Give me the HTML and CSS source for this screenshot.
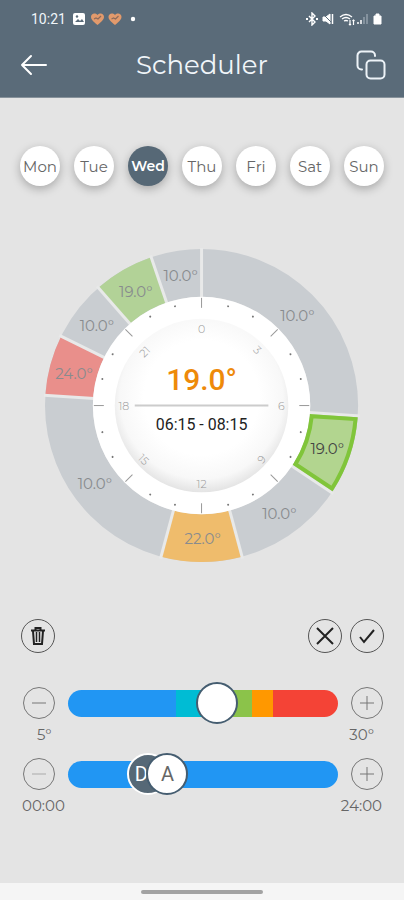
FILE: index.html
```html
<!DOCTYPE html>
<html lang="en">
<head>
<meta charset="utf-8">
<meta name="viewport" content="width=device-width, initial-scale=1">
<title>Scheduler</title>
<link rel="stylesheet" href="styles.css">
</head>
<body>
<header class="top">
  <div class="status">
    <span class="clock">10:21</span>
    <svg class="notices" width="74" height="14" viewBox="0 0 74 14" aria-hidden="true">
      <rect x="0" y="1" width="12" height="12" rx="2" fill="#fff"/>
      <path d="M2 10l3-3 2 2 2-2 2 3z" fill="#5a6b79"/><circle cx="4" cy="4.500" r="1.200" fill="#5a6b79"/>
      <g fill="#e29a6c">
        <path d="M24.500 13C20 9.500 18 7.500 18 4.800 18 1.500 22 .2 24.500 3 27 .2 31 1.500 31 4.800 31 7.500 29 9.500 24.500 13z"/>
        <path d="M42 13C37.500 9.500 35.500 7.500 35.500 4.800 35.500 1.500 39.500.2 42 3 44.500.2 48.500 1.500 48.500 4.800 48.500 7.500 46.500 9.500 42 13z"/>
      </g>
      <path d="M21 7l2-1 2 1 3-3M38.500 7l2-1 2 1 3-3" fill="none" stroke="#8b6a5b" stroke-width="1.200"/>
      <circle cx="60" cy="7" r="2.200" fill="#fff"/>
    </svg>
    <svg class="system" width="78" height="14" viewBox="0 0 78 14" fill="none" stroke="#fff" aria-hidden="true">
      <path d="M3 4l6 6-3 3V1l3 3-6 6" stroke-width="1.400"/><path d="M0 7h2M10 7h2" stroke-width="2"/>
      <path d="M17 5h3l4-3v10l-4-3h-3z" fill="#fff"/><path d="M17 2l10 10" stroke="#5a6b79"/><path d="M26.500 2v10" stroke-width="1.500"/>
      <path d="M34 5q6-5 12 0M36 7q4-3 8 0M38 9q2-1 4 0" stroke-width="1.300"/><path d="M44 8v5m-1-1l1 1 1-1M47.500 13V8m-1 1l1-1 1 1" stroke-width="1.200"/>
      <path d="M52 12v-2M55 12V8" stroke-width="1.500"/><path d="M58 12V5M61 12V2" stroke="#93a0aa" stroke-width="1.500"/>
      <path d="M68 4h2V2h3v2h2v8h-7z" fill="#fff" stroke-linejoin="round"/>
    </svg>
  </div>
  <div class="bar">
    <button class="plain" aria-label="Back">
      <svg width="28" height="22" viewBox="0 0 28 22" fill="none" stroke="#fff" stroke-width="2" stroke-linecap="round" stroke-linejoin="round"><path d="M26 11H2M11 2L2 11l9 9"/></svg>
    </button>
    <h1>Scheduler</h1>
    <button class="plain" aria-label="Copy schedule">
      <svg width="30" height="30" viewBox="0 0 30 30" fill="none" stroke="#edf3f8" stroke-width="2" stroke-linecap="round"><rect x="10.500" y="10.500" width="18" height="18" rx="4"/><path d="M6 19.500H5.500a4 4 0 0 1-4-4V5.500a4 4 0 0 1 4-4h9.500a4 4 0 0 1 4 4V6"/></svg>
    </button>
  </div>
</header>

<main>
  <nav class="days" aria-label="Day">
    <button>Mon</button><button>Tue</button><button class="active" aria-pressed="true">Wed</button><button>Thu</button><button>Fri</button><button>Sat</button><button>Sun</button>
  </nav>

  <svg class="dial" viewBox="-158 -158 316 316" role="img" aria-label="Temperature schedule for Wednesday">
    <defs>
      <radialGradient id="disc" cx="0" cy="-8" r="96" gradientUnits="userSpaceOnUse">
        <stop offset="0.600" stop-color="#fff"/><stop offset="0.850" stop-color="#f8f8f8"/><stop offset="1" stop-color="#e2e2e2"/>
      </radialGradient>
    </defs>
    <!-- One unit of path length is a quarter of an hour, starting at midnight. -->
    <g class="ring" transform="rotate(-90)">
      <circle r="133" pathLength="96" class="cool"/>
      <circle r="133" pathLength="96" class="mild" stroke-dasharray="8 88" stroke-dashoffset="-25"/>
      <circle r="133" pathLength="96" class="warm" stroke-dasharray="8 88" stroke-dashoffset="-44"/>
      <circle r="133" pathLength="96" class="hot" stroke-dasharray="6 90" stroke-dashoffset="-73"/>
      <circle r="133" pathLength="96" class="mild" stroke-dasharray="6 90" stroke-dashoffset="-85"/>
    </g>
    <g class="gaps">
      <path d="M0-108V-159"/>
      <path d="M0-108V-159" transform="rotate(93.750)"/>
      <path d="M0-108V-159" transform="rotate(123.750)"/>
      <path d="M0-108V-159" transform="rotate(165)"/>
      <path d="M0-108V-159" transform="rotate(195)"/>
      <path d="M0-108V-159" transform="rotate(273.750)"/>
      <path d="M0-108V-159" transform="rotate(296.250)"/>
      <path d="M0-108V-159" transform="rotate(318.750)"/>
      <path d="M0-108V-159" transform="rotate(341.250)"/>
    </g>
    <circle r="109" fill="#fff"/>
    <path class="selected" d="M110.500 10.700L154.400 13.600A155 155 0 0 1 130.800 83.200L94.200 58.700A111 111 0 0 0 110.500 10.700z"/>
    <circle r="87" fill="url(#disc)"/>
    <g class="ticks">
      <path id="tick" d="M0-108V-98"/>
      <use href="#tick" transform="rotate(45)"/><use href="#tick" transform="rotate(90)"/><use href="#tick" transform="rotate(135)"/><use href="#tick" transform="rotate(180)"/><use href="#tick" transform="rotate(225)"/><use href="#tick" transform="rotate(270)"/><use href="#tick" transform="rotate(315)"/>
    </g>
    <g class="dots">
      <circle id="dot" cy="-103" r="1" transform="rotate(15)"/>
      <use href="#dot" transform="rotate(15)"/><use href="#dot" transform="rotate(45)"/><use href="#dot" transform="rotate(60)"/><use href="#dot" transform="rotate(90)"/><use href="#dot" transform="rotate(105)"/><use href="#dot" transform="rotate(135)"/><use href="#dot" transform="rotate(150)"/><use href="#dot" transform="rotate(180)"/><use href="#dot" transform="rotate(195)"/><use href="#dot" transform="rotate(225)"/><use href="#dot" transform="rotate(240)"/><use href="#dot" transform="rotate(270)"/><use href="#dot" transform="rotate(285)"/><use href="#dot" transform="rotate(315)"/><use href="#dot" transform="rotate(330)"/>
    </g>
    <g class="hours">
      <text y="-73">0</text>
      <text transform="translate(56 -56) rotate(45)" y="4">3</text>
      <text x="80" y="4">6</text>
      <text transform="translate(60 54) rotate(-45)" y="4">9</text>
      <text y="83">12</text>
      <text transform="translate(-58 54) rotate(45)" y="4">15</text>
      <text x="-78" y="4">18</text>
      <text transform="translate(-57 -54) rotate(-45)" y="4">21</text>
    </g>
    <g class="temps">
      <text x="96" y="-85">10.0°</text><text x="126" y="49" class="current">19.0°</text><text x="78" y="114">10.0°</text><text x="1" y="139">22.0°</text><text x="-107" y="84">10.0°</text><text x="-128" y="-27">24.0°</text><text x="-105" y="-75">10.0°</text><text x="-66" y="-109">19.0°</text><text x="-21" y="-125">10.0°</text>
    </g>
    <text class="reading" y="-16">19.0°</text>
    <path d="M-67 0H67" stroke="#ccc" stroke-width="2"/>
    <text class="period" y="25">06:15 - 08:15</text>
  </svg>

  <div class="actions">
    <button class="round" aria-label="Delete period">
      <svg width="20" height="20" viewBox="0 0 20 20" fill="none" stroke="#222" stroke-width="2"><path d="M3 4.500h14M7.500 4V2h5v2M5 5l1 13h8l1-13"/><path d="M8.500 6v10M11.500 6v10" stroke-width="1.500"/></svg>
    </button>
    <button class="round push" aria-label="Cancel">
      <svg width="20" height="20" viewBox="0 0 20 20" fill="none" stroke="#222" stroke-width="2"><path d="M2 2l16 16M18 2L2 18"/></svg>
    </button>
    <button class="round" aria-label="Confirm">
      <svg width="20" height="20" viewBox="0 0 20 20" fill="none" stroke="#222" stroke-width="2"><path d="M3 11l4 5L17 4"/></svg>
    </button>
  </div>

  <section class="control">
    <button class="round small" aria-label="Lower temperature"><svg width="16" height="16" viewBox="0 0 16 16" stroke="#777"><path d="M1 8h14"/></svg></button>
    <div class="slider"><input class="temperature" type="range" min="5" max="30" step="0.5" value="19" aria-label="Temperature"></div>
    <button class="round small" aria-label="Raise temperature"><svg width="16" height="16" viewBox="0 0 16 16" stroke="#777"><path d="M1 8h14M8 1v14"/></svg></button>
  </section>
  <div class="limits degrees"><span>5°</span><span>30°</span></div>

  <section class="control">
    <button class="round small" aria-label="Earlier"><svg width="16" height="16" viewBox="0 0 16 16" stroke="#aaa"><path d="M1 8h14"/></svg></button>
    <div class="slider">
      <input class="from" id="from" type="range" min="0" max="1440" step="15" value="375">
      <label class="letter light" for="from" style="--at: 0.26">D</label>
      <input class="until" id="until" type="range" min="0" max="1440" step="15" value="495">
      <label class="letter" for="until" style="--at: 0.344">A</label>
    </div>
    <button class="round small" aria-label="Later"><svg width="16" height="16" viewBox="0 0 16 16" stroke="#777"><path d="M1 8h14M8 1v14"/></svg></button>
  </section>
  <div class="limits"><span>00:00</span><span>24:00</span></div>
</main>
<footer><span class="handle"></span></footer>
</body>
</html>
```

FILE: styles.css
```css
* { box-sizing: border-box; }

body {
  margin: 0;
  min-height: 100vh;
  display: flex;
  flex-direction: column;
  background: #e4e4e4;
  color: #666;
  font-family: Montserrat, Inter, sans-serif;
}

button {
  margin: 0;
  padding: 0;
  border: 0;
  background: none;
  font: inherit;
  color: inherit;
  cursor: pointer;
}

svg { display: block; flex: none; }

.top {
  background: #5a6b79;
  color: #f0f5f9;
  height: 98px;
  border-bottom: 1px solid #87929b;
}

.status {
  display: flex;
  align-items: center;
  height: 37px;
  padding: 0 20px 0 31px;
}

.clock { font: 14px Roboto, sans-serif; width: 42px; }
.system { margin-left: auto; }

.bar {
  display: flex;
  align-items: center;
  justify-content: space-between;
  height: 56px;
  padding: 0 18px 0 20px;
}

h1 { margin: 0; font-size: 26px; line-height: 32px; font-weight: 400; }

main { flex: 1; padding-top: 48px; }

.days {
  display: flex;
  justify-content: space-between;
  padding: 0 20px;
}

.days button {
  width: 40px;
  height: 40px;
  border-radius: 50%;
  background: #fff;
  font-size: 15px;
  box-shadow: 0 3px 10px #0004;
  display: flex;
  align-items: center;
  justify-content: center;
}

.days .active { background: #566876; color: #fff; font-size: 14px; font-weight: 600; }

.dial { width: 78%; margin: 62px auto 56px; }

.ring { fill: none; stroke-width: 48; }
.cool { stroke: #c9cdd1; }
.mild { stroke: #b2d297; }
.warm { stroke: #efbc6c; }
.hot { stroke: #e98f8b; }
.gaps { stroke: #e8e9e9; stroke-width: 3; }
.selected { fill: #b2d58f; stroke: #80c53a; stroke-width: 4; }
.ticks { stroke: #999; }
.dots { fill: #777; }

.dial text { text-anchor: middle; }
.hours { fill: #999; font-size: 11px; font-weight: 300; }
.temps { fill: #888b8e; font-size: 15px; }
.temps .current { fill: #444; }
.reading { fill: #ee8a0a; font: 500 30px Roboto, sans-serif; }
.period { fill: #222; font: 16px Roboto, sans-serif; }

.actions { display: flex; gap: 8px; padding: 0 20px 0 21px; }
.push { margin-left: auto; }

.round {
  width: 34px;
  height: 34px;
  border: 1px solid #555;
  border-radius: 50%;
  display: flex;
  align-items: center;
  justify-content: center;
  flex: none;
}

.small { width: 32px; height: 32px; border-color: #777; }

.control {
  display: flex;
  align-items: center;
  justify-content: space-between;
  gap: 13px;
  padding: 0 21px 0 23px;
}

.actions + .control { margin-top: 29px; }

.slider { position: relative; flex: 1; height: 42px; }

input {
  appearance: none;
  position: absolute;
  inset: 0;
  width: 100%;
  height: 42px;
  margin: 0;
  background: none;
  pointer-events: none;
}

input::-webkit-slider-runnable-track { height: 27px; border-radius: 14px; }

.temperature::-webkit-slider-runnable-track {
  background: linear-gradient(90deg, #2196f3 40%, #00bcd4 40% 56%, #8bc34a 56% 68%, #ff9800 68% 76%, #f44336 76%);
}

.from::-webkit-slider-runnable-track { background: #2196f3; }

input::-webkit-slider-thumb {
  appearance: none;
  pointer-events: auto;
  width: 42px;
  height: 42px;
  margin-top: -8px;
  border: 2px solid #455d70;
  border-radius: 50%;
  background: #fff;
}

.from::-webkit-slider-thumb { background: #566876; border-color: #fff; }

.letter {
  position: absolute;
  left: calc(21px + (100% - 42px) * var(--at));
  top: 50%;
  transform: translate(-50%, -50%);
  pointer-events: none;
  font: 20px Roboto, sans-serif;
}

.light { color: #fff; padding-right: 14px; }

.limits {
  display: flex;
  justify-content: space-between;
  padding: 2px 22px 0;
  font-size: 15px;
  line-height: 18px;
}

.degrees { padding: 2px 30px 0 37px; margin-bottom: 9px; }

footer {
  display: flex;
  align-items: center;
  justify-content: center;
  height: 17px;
  background: #f5f5f5;
}

.handle { width: 30%; height: 4px; border-radius: 2px; background: #a2a2a2; }
```
